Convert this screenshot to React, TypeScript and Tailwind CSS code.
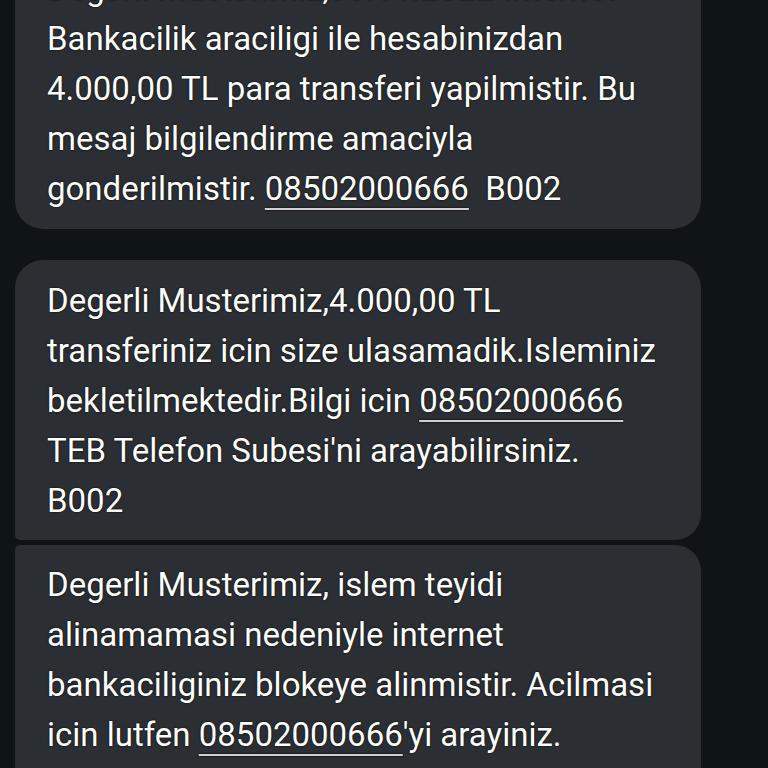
import React from "react";

type Part = { text: string; link?: boolean };

type Mesaj = {
  lines: Part[][];
  className: string;
};

const NUMARA = "08502000666";

const mesajlar: Mesaj[] = [
  {
    lines: [
      [{ text: "Degerli Musterimiz,30.11.2022 Internet" }],
      [{ text: "Bankacilik araciligi ile hesabinizdan" }],
      [{ text: "4.000,00 TL para transferi yapilmistir. Bu" }],
      [{ text: "mesaj bilgilendirme amaciyla" }],
      [{ text: "gonderilmistir. " }, { text: NUMARA, link: true }, { text: "\u00a0 B002" }],
    ],
    className: "-mt-[56px] rounded-[28px] pt-[20px] pb-[15px]",
  },
  {
    lines: [
      [{ text: "Degerli Musterimiz,4.000,00 TL" }],
      [{ text: "transferiniz icin size ulasamadik.Isleminiz" }],
      [{ text: "bekletilmektedir.Bilgi icin " }, { text: NUMARA, link: true }],
      [{ text: "TEB Telefon Subesi'ni arayabilirsiniz." }],
      [{ text: "B002" }],
    ],
    className: "mt-[31px] rounded-t-[28px] rounded-br-[26px] rounded-bl-[5px] pt-[16px] pb-[14px]",
  },
  {
    lines: [
      [{ text: "Degerli Musterimiz, islem teyidi" }],
      [{ text: "alinamamasi nedeniyle internet" }],
      [{ text: "bankaciliginiz blokeye alinmistir. Acilmasi" }],
      [{ text: "icin lutfen " }, { text: NUMARA, link: true }, { text: "'yi arayiniz." }],
    ],
    className: "mt-[5px] rounded-tl-[5px] rounded-tr-[26px] pt-[15px] pb-[40px]",
  },
];

const App = () => {
  return (
    <div className="h-[768px] w-[768px] overflow-hidden bg-[#0f1417] pl-[15px] font-['Roboto',sans-serif]">
      <div className="flex w-[686px] flex-col">
        {mesajlar.map((m, i) => (
          <div key={i} className={`bg-[#2b2e32] pl-[32px] pr-[20px] ${m.className}`}>
            {m.lines.map((line, j) => (
              <div
                key={j}
                className="whitespace-nowrap text-[33px] leading-[50px] text-white [text-shadow:0_0_2px_rgba(0,0,0,0.95)]"
              >
                {line.map((p, k) =>
                  p.link ? (
                    <span key={k} className="underline decoration-[#d0d0d0] decoration-2 underline-offset-[8px]">
                      {p.text}
                    </span>
                  ) : (
                    <span key={k}>{p.text}</span>
                  )
                )}
              </div>
            ))}
          </div>
        ))}
      </div>
    </div>
  );
};

export default App;
